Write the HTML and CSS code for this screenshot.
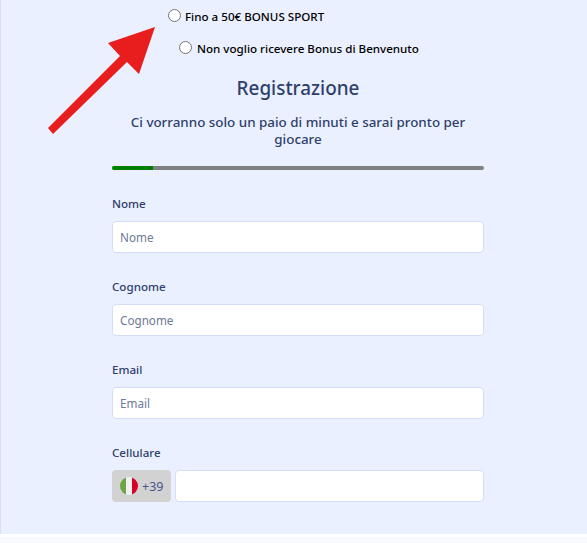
FILE: index.html
```html
<!DOCTYPE html>
<html lang="en">
<head>
    <meta charset="UTF-8">
    <title>Registrazione</title>
    <link rel="stylesheet" href="styles.css">
</head>
<body>
<div class="page">
    <!-- Arrow pointing at the bonus option -->
    <svg class="arrow" width="110" height="140" viewBox="0 0 110 140">
        <polygon points="107,27 60,43 72,56 0,128 5,134 79,62 91,74" fill="#e81d1d"/>
    </svg>
    <div class="form-container">
        <label class="bonus bonus-sport"><input type="radio" name="bonus"> Fino a 50€ BONUS SPORT</label>
        <label class="bonus bonus-none"><input type="radio" name="bonus"> Non voglio ricevere Bonus di Benvenuto</label>
        <h1>Registrazione</h1>
        <p class="subtitle">Ci vorranno solo un paio di minuti e sarai pronto per giocare</p>
        <div class="progress"><div class="progress-done"></div></div>

        <div class="field">
            <label>Nome</label>
            <input type="text" placeholder="Nome">
        </div>
        <div class="field">
            <label>Cognome</label>
            <input type="text" placeholder="Cognome">
        </div>
        <div class="field">
            <label>Email</label>
            <input type="text" placeholder="Email">
        </div>
        <div class="field">
            <label>Cellulare</label>
            <div class="phone">
                <div class="prefix">
                    <svg width="18" height="18" viewBox="0 0 18 18">
                        <clipPath id="flag"><circle cx="9" cy="9" r="9"/></clipPath>
                        <g clip-path="url(#flag)">
                            <rect x="0" width="6" height="18" fill="#6da544"/>
                            <rect x="6" width="6" height="18" fill="#f0f0f0"/>
                            <rect x="12" width="6" height="18" fill="#d80027"/>
                        </g>
                    </svg>
                    <span>+39</span>
                </div>
                <input type="text">
            </div>
        </div>
    </div>
</div>
<div class="footer-strip"></div>
</body>
</html>
```

FILE: styles.css
```css
html, body {
    margin: 0;
    padding: 0;
}

body {
    font-family: "Noto Sans", "Open Sans", sans-serif;
    background-color: #f8f9ff;
    color: #2f3f6b;
    height: 543px;
    overflow: hidden;
}

.page {
    position: relative;
    height: 534px;
    box-sizing: border-box;
    background-color: #eaf0ff;
    border-left: 1px solid #dcdfe6;
    padding: 0 103px 0 111px;
}

.footer-strip {
    height: 3px;
    background-color: #fff;
}

.arrow {
    position: absolute;
    left: 47px;
    top: 0;
    overflow: visible;
}

.form-container {
    display: flex;
    flex-direction: column;
}

.bonus {
    display: flex;
    align-items: center;
    font-size: 11.6px;
    font-weight: 500;
    color: #000;
    height: 17px;
}

.bonus input {
    appearance: none;
    width: 13px;
    height: 13px;
    margin: -3px 4px 0 0;
    border: 1px solid #767676;
    border-radius: 50%;
    background-color: #fff;
    box-sizing: border-box;
    flex-shrink: 0;
}

.bonus-sport {
    margin: 8px 0 0 56px;
}

.bonus-none {
    margin: 15px 0 0 67px;
}

.bonus-none input {
    margin-right: 5px;
}

h1 {
    margin: 18px 0 0;
    font-size: 18.9px;
    line-height: 27px;
    font-weight: 500;
    text-align: center;
}

.subtitle {
    margin: 12px 0 0;
    font-size: 13.4px;
    line-height: 17px;
    font-weight: 500;
    text-align: center;
}

.progress {
    height: 4px;
    margin-top: 18px;
    background-color: #808080;
    border-radius: 2px;
    overflow: hidden;
}

.progress-done {
    width: 41px;
    height: 100%;
    background-color: #008000;
}

.field {
    margin-top: 25px;
    height: 58px;
}

.field label {
    display: block;
    font-size: 11.6px;
    line-height: 17px;
    font-weight: 500;
    margin-bottom: 9px;
}

.field input {
    display: block;
    width: 100%;
    height: 32px;
    box-sizing: border-box;
    padding: 0 7px;
    font-family: inherit;
    font-size: 11.7px;
    color: #2f3f6b;
    background-color: #fff;
    border: 1px solid #d5def8;
    border-radius: 4px;
    outline: none;
}

.field input::placeholder {
    color: #6c7a96;
    opacity: 1;
}

.phone {
    display: flex;
    gap: 4px;
}

.prefix {
    display: flex;
    align-items: center;
    gap: 4px;
    width: 59px;
    height: 32px;
    box-sizing: border-box;
    padding-left: 8px;
    flex-shrink: 0;
    background-color: #d2d2d2;
    border-radius: 4px;
    font-size: 12.5px;
    color: #46568a;
}

.phone input {
    flex: 1;
    min-width: 0;
}
```
